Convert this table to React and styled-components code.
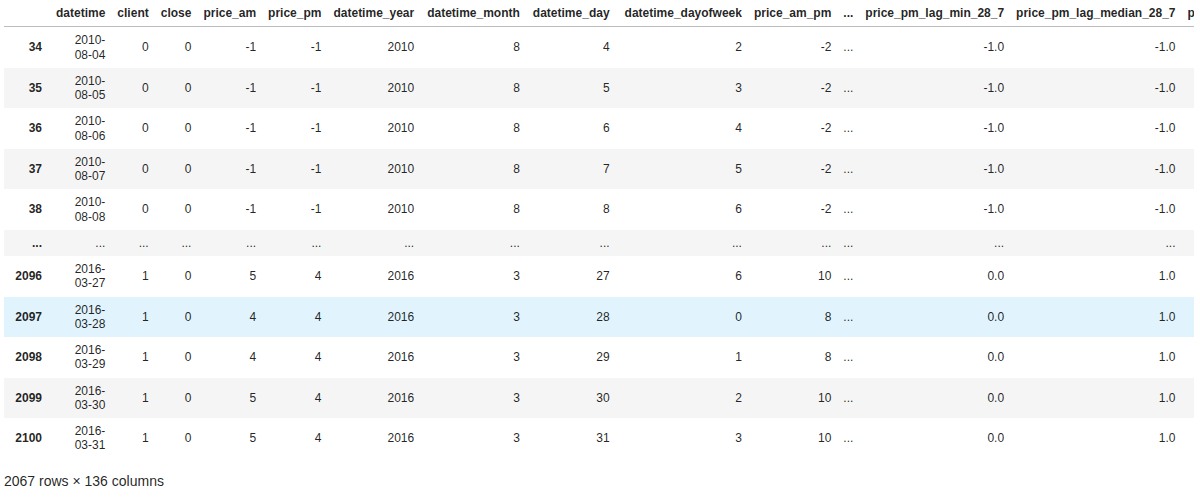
import styled, { createGlobalStyle } from "styled-components";

const GlobalStyle = createGlobalStyle`
    body {
        margin: 0;
        background: #fff;
        font-family: "Liberation Sans", Arial, Helvetica, sans-serif;
        color: rgba(0, 0, 0, 0.87);
    }
`;

const Output = styled.div`
    padding: 0 6px 0 4px;
`;

const Scroller = styled.div`
    overflow: hidden;
`;

const Table = styled.table`
    border-collapse: collapse;
    border-spacing: 0;
    font-size: 12px;
    line-height: 14.25px;
`;

const Head = styled.thead`
    border-bottom: 1px solid #bdbdbd;
`;

const Row = styled.tr`
    background: ${(p) => (p.$hover ? "#e1f4fd" : "#fff")};
    &:nth-child(even) {
        background: ${(p) => (p.$hover ? "#e1f4fd" : "#f5f5f5")};
    }
`;

const Th = styled.th`
    text-align: right;
    vertical-align: middle;
    padding: 6px;
    padding-left: ${(p) => 6 + (p.$extra || 0)}px;
    font-weight: bold;
    white-space: nowrap;
`;

const Td = styled.td`
    text-align: right;
    vertical-align: middle;
    padding: 6px;
    white-space: nowrap;
`;

const Footer = styled.p`
    margin: 14px 0 0;
    font-size: 14px;
    line-height: 17px;
`;

// extra left padding so the columns line up with the notebook output
const columns = [
    ["datetime", 2],
    ["client"],
    ["close"],
    ["price_am"],
    ["price_pm"],
    ["datetime_year"],
    ["datetime_month", 1],
    ["datetime_day", 1],
    ["datetime_dayofweek", 3],
    ["price_am_pm"],
    ["..."],
    ["price_pm_lag_min_28_7"],
    ["price_pm_lag_median_28_7"],
    ["price_pm_lag_max_28_7"],
    ["price_pm_lag_mean_28_7"],
];

const early = [
    ["34", "2010-08-04", 4, 2],
    ["35", "2010-08-05", 5, 3],
    ["36", "2010-08-06", 6, 4],
    ["37", "2010-08-07", 7, 5],
    ["38", "2010-08-08", 8, 6],
].map(([idx, date, day, dow]) => [
    idx, date, "0", "0", "-1", "-1", "2010", "8", String(day), String(dow), "-2", "...", "-1.0", "-1.0", "-1.0", "-1.0",
]);

const late = [
    ["2096", "2016-03-27", "5", "4", "27", "6", "10"],
    ["2097", "2016-03-28", "4", "4", "28", "0", "8"],
    ["2098", "2016-03-29", "4", "4", "29", "1", "8"],
    ["2099", "2016-03-30", "5", "4", "30", "2", "10"],
    ["2100", "2016-03-31", "5", "4", "31", "3", "10"],
].map(([idx, date, am, pm, day, dow, ampm]) => [
    idx, date, "1", "0", am, pm, "2016", "3", day, dow, ampm, "...", "0.0", "1.0", "4.0", "2.1",
]);

const dots = Array(columns.length + 1).fill("...");

const rows = [...early, dots, ...late];

const DateText = ({ value }) => {
    if (value === "...") return value;
    const [y, m, d] = value.split("-");
    return (
        <>
            {y}-<br />
            {m}-{d}
        </>
    );
};

export default function App() {
    return (
        <>
            <GlobalStyle />
            <Output>
                <Scroller>
                    <Table>
                        <Head>
                            <tr>
                                <Th $extra={32}></Th>
                                {columns.map(([c, extra], i) => (
                                    <Th key={i} $extra={extra}>{c}</Th>
                                ))}
                            </tr>
                        </Head>
                        <tbody>
                            {rows.map((r, i) => (
                                <Row key={i} $hover={r[0] === "2097"}>
                                    <Th>{r[0]}</Th>
                                    <Td>
                                        <DateText value={r[1]} />
                                    </Td>
                                    {r.slice(2).map((v, j) => (
                                        <Td key={j}>{v}</Td>
                                    ))}
                                </Row>
                            ))}
                        </tbody>
                    </Table>
                </Scroller>
                <Footer>2067 rows × 136 columns</Footer>
            </Output>
        </>
    );
}
